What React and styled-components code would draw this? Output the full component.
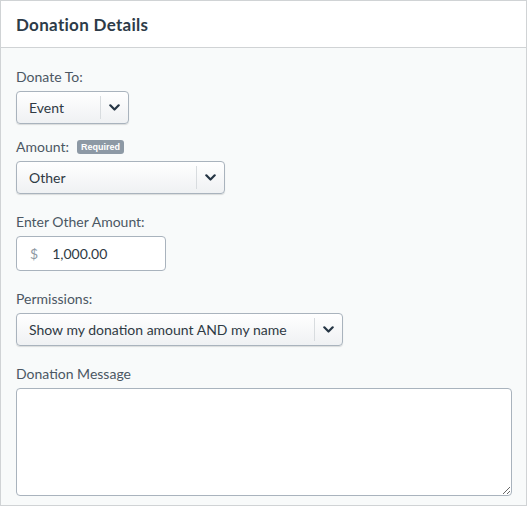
import React from "react";
import styled, { createGlobalStyle } from "styled-components";

const Global = createGlobalStyle`
  html, body { margin: 0; padding: 0; background: #ffffff; }
  body { font-family: "Lato", "Liberation Sans", sans-serif; }
  * { box-sizing: border-box; }
`;

const Panel = styled.div`
  width: 527px;
  height: 506px;
  border: 1px solid #d0d3d5;
  display: flex;
  flex-direction: column;
  background: #f8fafa;
  overflow: hidden;
`;

const Header = styled.div`
  height: 47px;
  flex: none;
  background: #ffffff;
  border-bottom: 1px solid #d0d3d5;
  display: flex;
  align-items: center;
  padding: 0 15px;
`;

const Title = styled.h2`
  margin: 0;
  font-size: 17px;
  font-weight: 700;
  color: #2d3b48;
  letter-spacing: 0.3px;
`;

const Body = styled.div`
  padding: 21px 15px 0 15px;
  display: flex;
  flex-direction: column;
`;

const Field = styled.div`
  display: flex;
  flex-direction: column;
  margin-bottom: ${(p) => p.$mb ?? 20}px;
`;

const LabelRow = styled.div`
  display: flex;
  align-items: center;
  gap: 8px;
  height: 16px;
  margin-bottom: 6px;
`;

const Label = styled.label`
  font-size: 14px;
  color: #4b5763;
  line-height: 16px;
`;

const Badge = styled.span`
  background: #8d99a5;
  color: #ffffff;
  font-size: 9px;
  font-weight: 700;
  border-radius: 3px;
  padding: 0 4px;
  height: 14px;
  line-height: 14px;
  font-family: "Liberation Sans", sans-serif;
`;

const Select = styled.div`
  width: ${(p) => p.$w}px;
  height: 33px;
  border: 1px solid #a9b3bd;
  border-radius: 4px;
  background: linear-gradient(#ffffff, #eff1f3);
  box-shadow: 0 1px 1px rgba(0, 0, 0, 0.12);
  display: flex;
  align-items: center;
`;

const SelectValue = styled.div`
  flex: 1;
  padding-left: 12px;
  font-size: 14px;
  color: #2f3a44;
`;

const Arrow = styled.div`
  width: 28px;
  height: 23px;
  display: flex;
  align-items: center;
  justify-content: center;
  border-left: 1px solid #d8dcdf;
`;

const Input = styled.div`
  width: 150px;
  height: 35px;
  border: 1px solid #a9b3bd;
  border-radius: 4px;
  background: #ffffff;
  display: flex;
  align-items: center;
  padding-left: 13px;
  gap: 14px;
  font-size: 14px;
`;

const Currency = styled.span`
  color: #8e99a3;
`;

const Value = styled.span`
  color: #2f3a44;
`;

const TextArea = styled.textarea`
  width: 496px;
  height: 108px;
  border: 1px solid #a9b3bd;
  border-radius: 4px;
  background: #ffffff;
  resize: vertical;
  font-family: inherit;
  display: block;
  outline: none;
`;

const Chevron = () => (
  <svg width="11" height="7" viewBox="0 0 11 7">
    <path d="M1.3 1.3 L5.5 5.5 L9.7 1.3" fill="none" stroke="#253544" strokeWidth="2.2" strokeLinecap="round" strokeLinejoin="round" />
  </svg>
);

const Dropdown = ({ w, value }) => (
  <Select $w={w}>
    <SelectValue>{value}</SelectValue>
    <Arrow>
      <Chevron />
    </Arrow>
  </Select>
);

export default function App() {
  return (
    <>
      <Global />
      <Panel>
        <Header>
          <Title>Donation Details</Title>
        </Header>
        <Body>
          <Field $mb={15}>
            <LabelRow>
              <Label>Donate To:</Label>
            </LabelRow>
            <Dropdown w={113} value="Event" />
          </Field>
          <Field>
            <LabelRow>
              <Label>Amount:</Label>
              <Badge>Required</Badge>
            </LabelRow>
            <Dropdown w={209} value="Other" />
          </Field>
          <Field>
            <LabelRow>
              <Label>Enter Other Amount:</Label>
            </LabelRow>
            <Input>
              <Currency>$</Currency>
              <Value>1,000.00</Value>
            </Input>
          </Field>
          <Field>
            <LabelRow>
              <Label>Permissions:</Label>
            </LabelRow>
            <Dropdown w={327} value="Show my donation amount AND my name" />
          </Field>
          <Field>
            <LabelRow>
              <Label>Donation Message</Label>
            </LabelRow>
            <TextArea />
          </Field>
        </Body>
      </Panel>
    </>
  );
}
